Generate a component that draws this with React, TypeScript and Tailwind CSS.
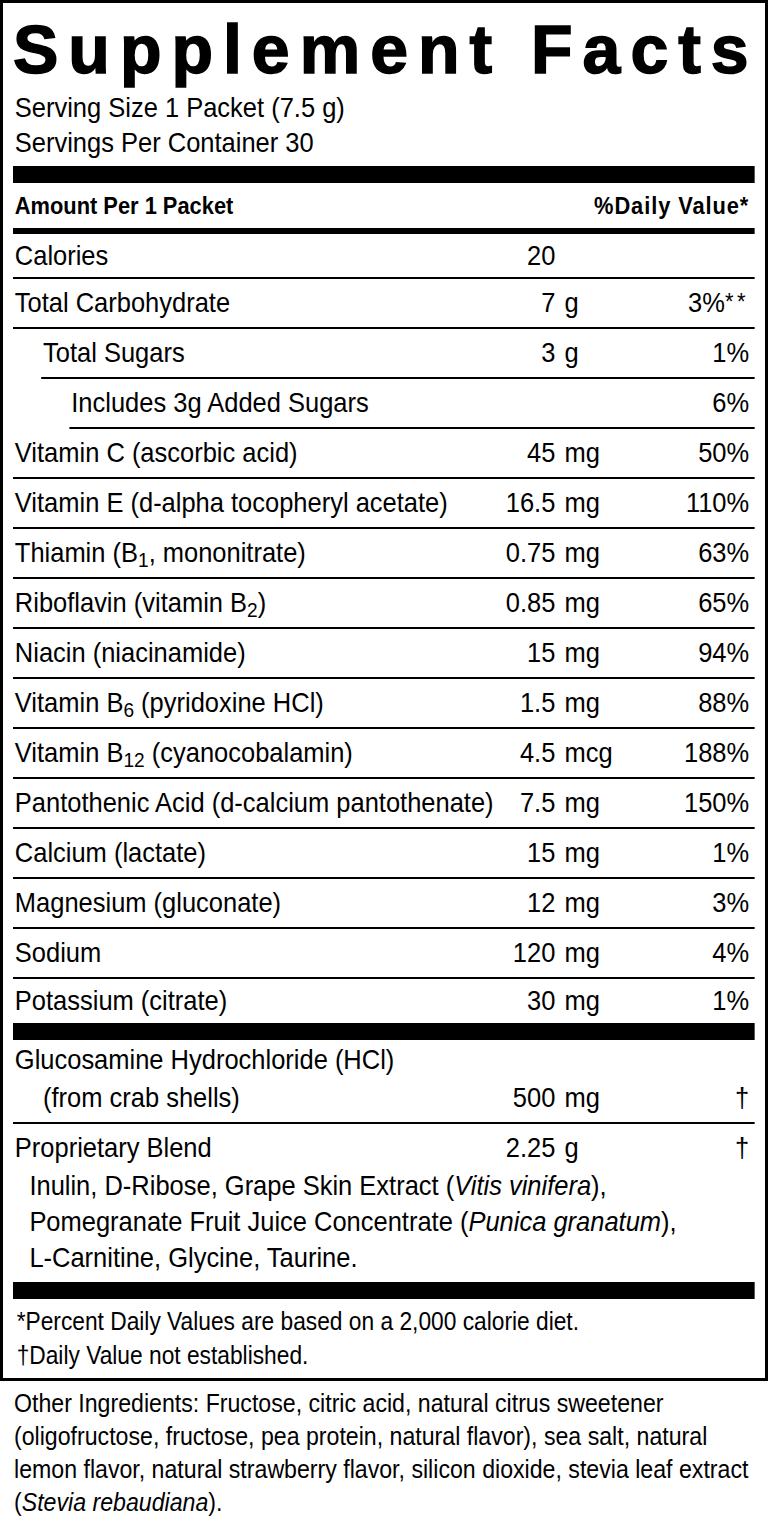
import React from "react";

const SANS = "font-['Liberation_Sans','Arial',sans-serif]";

type RowProps = {
  name: React.ReactNode;
  num?: string;
  unit?: string;
  dv?: React.ReactNode;
  indent?: 0 | 1 | 2;
  kind?: "first" | "normal" | "last";
};

function Row({ name, num = "", unit = "", dv = "", indent = 0, kind = "normal" }: RowProps) {
  const indentCls = indent === 2 ? "ml-[62px]" : indent === 1 ? "ml-[31px]" : "ml-0";
  const hCls =
    kind === "first"
      ? "h-[45px] border-b-2 border-black"
      : kind === "last"
      ? "h-[44px]"
      : "h-[50px] border-b-2 border-black";
  return (
    <div className={`flex items-center ${indentCls} ${hCls} text-[28px] leading-[34px]`}>
      <div className="flex-1 min-w-0 whitespace-nowrap pl-[2px]">{name}</div>
      <div className="w-[100px] shrink-0 text-right whitespace-nowrap">{num}</div>
      <div className="w-[95px] shrink-0 pl-[10px] whitespace-nowrap">{unit}</div>
      <div className="w-[124px] shrink-0 pr-[6px] text-right whitespace-nowrap">{dv}</div>
    </div>
  );
}

export default function App() {
  return (
    <div className={`w-[768px] bg-white text-black ${SANS}`}>
      <div className="border-[3px] border-black px-[10px] overflow-hidden">
        <div className="pt-[12px] font-bold text-[68px] leading-[68px] tracking-[10px] whitespace-nowrap [-webkit-text-stroke:1.5px_black]">
          Supplement Facts
        </div>
        <div className="w-[742px]">
          <div className="w-[815px] origin-left scale-x-[0.91]">
            <div className="mt-[7px] pl-[2px] text-[28px] leading-[35px]">
              <div>Serving Size 1 Packet (7.5 g)</div>
              <div>Servings Per Container 30</div>
            </div>
            <div className="mt-[6px] h-[17px] bg-black" />
            <div className="flex h-[45px] items-center justify-between pl-[2px] pr-[6px] text-[24px] font-bold">
              <span>Amount Per 1 Packet</span>
              <span className="tracking-[1px]">%Daily Value*</span>
            </div>
            <div className="h-[6px] bg-black" />
            <Row kind="first" name="Calories" num="20" />
            <Row
              name="Total Carbohydrate"
              num="7"
              unit="g"
              dv={
                <span>
                  3%<span className="tracking-[4px] text-[24px] relative -top-[2px]">**</span>
                </span>
              }
            />
            <Row indent={1} name="Total Sugars" num="3" unit="g" dv="1%" />
            <Row indent={2} name="Includes 3g Added Sugars" dv="6%" />
            <Row name="Vitamin C (ascorbic acid)" num="45" unit="mg" dv="50%" />
            <Row name="Vitamin E (d-alpha tocopheryl acetate)" num="16.5" unit="mg" dv="110%" />
            <Row
              name={
                <>
                  Thiamin (B<sub>1</sub>, mononitrate)
                </>
              }
              num="0.75"
              unit="mg"
              dv="63%"
            />
            <Row
              name={
                <>
                  Riboflavin (vitamin B<sub>2</sub>)
                </>
              }
              num="0.85"
              unit="mg"
              dv="65%"
            />
            <Row name="Niacin (niacinamide)" num="15" unit="mg" dv="94%" />
            <Row
              name={
                <>
                  Vitamin B<sub>6</sub> (pyridoxine HCl)
                </>
              }
              num="1.5"
              unit="mg"
              dv="88%"
            />
            <Row
              name={
                <>
                  Vitamin B<sub>12</sub> (cyanocobalamin)
                </>
              }
              num="4.5"
              unit="mcg"
              dv="188%"
            />
            <Row name="Pantothenic Acid (d-calcium pantothenate)" num="7.5" unit="mg" dv="150%" />
            <Row name="Calcium (lactate)" num="15" unit="mg" dv="1%" />
            <Row name="Magnesium (gluconate)" num="12" unit="mg" dv="3%" />
            <Row name="Sodium" num="120" unit="mg" dv="4%" />
            <Row kind="last" name="Potassium (citrate)" num="30" unit="mg" dv="1%" />
            <div className="h-[17px] bg-black" />

            <div className="border-b-2 border-black pt-[1px] pb-[5px] text-[28px] leading-[38px]">
              <div className="pl-[2px] whitespace-nowrap">Glucosamine Hydrochloride (HCl)</div>
              <div className="flex items-center">
                <div className="flex-1 min-w-0 whitespace-nowrap pl-[33px]">(from crab shells)</div>
                <div className="w-[100px] shrink-0 text-right">500</div>
                <div className="w-[95px] shrink-0 pl-[10px]">mg</div>
                <div className="w-[124px] shrink-0 pr-[6px] text-right">†</div>
              </div>
            </div>

            <div className="pt-[6px] pb-[6px] text-[28px] leading-[36px]">
              <div className="flex items-center">
                <div className="flex-1 min-w-0 whitespace-nowrap pl-[2px]">Proprietary Blend</div>
                <div className="w-[100px] shrink-0 text-right">2.25</div>
                <div className="w-[95px] shrink-0 pl-[10px]">g</div>
                <div className="w-[124px] shrink-0 pr-[6px] text-right">†</div>
              </div>
              <div className="mt-[2px] pl-[18px] whitespace-nowrap">
                <div>
                  Inulin, D-Ribose, Grape Skin Extract (<i>Vitis vinifera</i>),
                </div>
                <div>
                  Pomegranate Fruit Juice Concentrate (<i>Punica granatum</i>),
                </div>
                <div>L-Carnitine, Glycine, Taurine.</div>
              </div>
            </div>
            <div className="h-[17px] bg-black" />

            <div className="pt-[5px] pb-[6px] pl-[4px] text-[25px] leading-[34px] whitespace-nowrap">
              <div>*Percent Daily Values are based on a 2,000 calorie diet.</div>
              <div>†Daily Value not established.</div>
            </div>
          </div>
        </div>
      </div>

      <div className="w-[768px] overflow-hidden pl-[14px]">
        <div className="w-[830px] origin-left scale-x-[0.89] pt-[6px] pb-[6px] text-[26px] leading-[33px] whitespace-nowrap">
          <div>Other Ingredients: Fructose, citric acid, natural citrus sweetener</div>
          <div>(oligofructose, fructose, pea protein, natural flavor), sea salt, natural</div>
          <div>lemon flavor, natural strawberry flavor, silicon dioxide, stevia leaf extract</div>
          <div>
            (<i>Stevia rebaudiana</i>).
          </div>
        </div>
      </div>
    </div>
  );
}
